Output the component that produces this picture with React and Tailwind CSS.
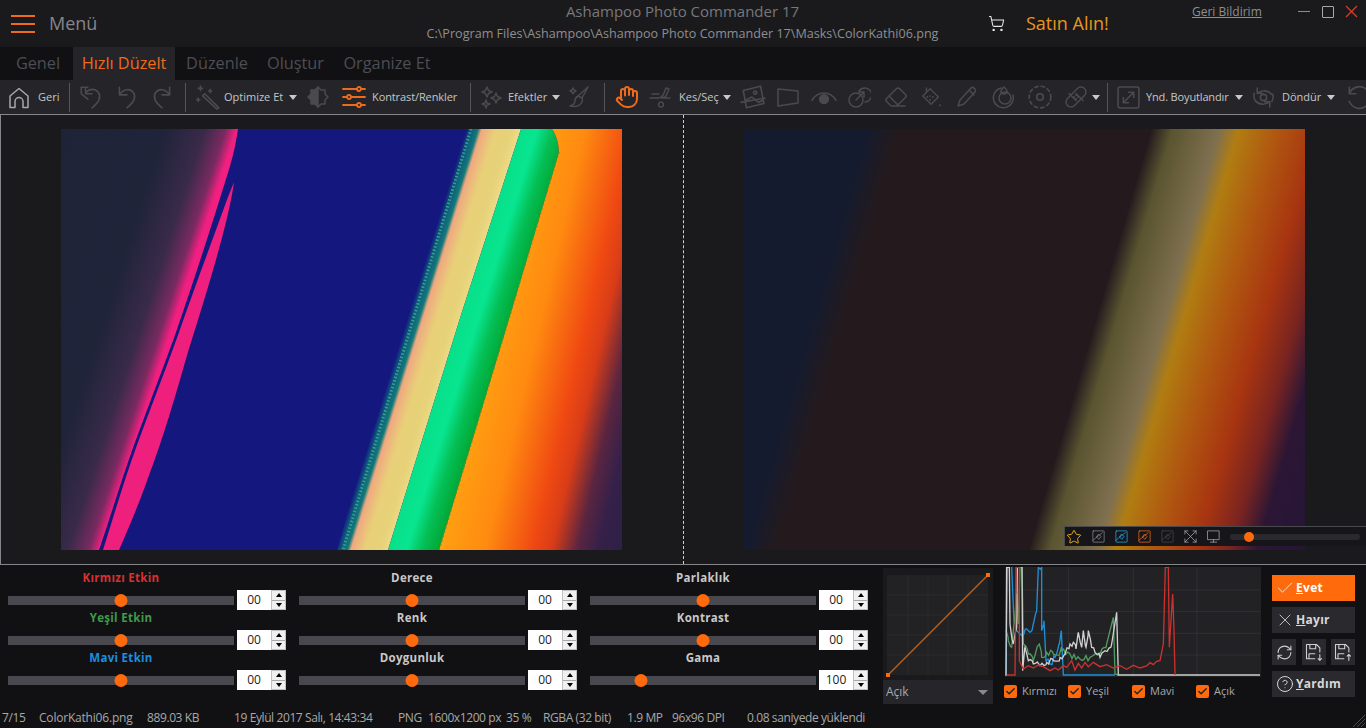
import { Hand, ShoppingCart, Star, Eraser, Check, X, RefreshCw, CircleHelp } from 'lucide-react';

const Ico = ({ size = 24, className = '', sw = 1.5, children }) => (
  <svg width={size} height={size} viewBox="0 0 24 24" fill="none" stroke="currentColor" strokeWidth={sw} strokeLinecap="round" strokeLinejoin="round" className={className}>
    {children}
  </svg>
);

const Caret = () => <span className="block w-0 h-0 border-l-[4px] border-r-[4px] border-t-[5px] border-l-transparent border-r-transparent border-t-[#c8c8c8]" />;
const Sep = () => <span className="block w-px h-[29px] bg-[#55555a]" />;

const Slot = ({ className = '', children }) => (
  <div className={`flex h-full items-center justify-center shrink-0 ${className}`}>{children}</div>
);

const ToolText = ({ className = '', children }) => (
  <div className={`flex h-full items-center shrink-0 whitespace-nowrap pt-[1px] text-[11px] text-[#c6c6c6] ${className}`}>{children}</div>
);

const Toolbar = () => {
  const dim = 'text-[#4a4a4f]';
  return (
    <div className="flex h-[34px] shrink-0 bg-[#252529] overflow-hidden">
      <Slot className="w-[7px]" />
      <Slot className="w-[24px] text-[#a8a8a8]">
        <Ico size={25}><path d="M3 22V10.500L12 3l9 7.500V22h-5v-6a4 4 0 0 0-8 0v6z" /></Ico>
      </Slot>
      <ToolText className="w-[32px] pl-[7px]">Geri</ToolText>
      <Slot className="w-[12px]"><Sep /></Slot>
      <Slot className={`w-[32px] ${dim}`}>
        <Ico size={26}><path d="M3 9l6 5M3 9V3h6M7 3v6h6M7 8c4-4 9-4 12 0 3 5-1 10-6 14" /></Ico>
      </Slot>
      <Slot className={`w-[40px] ${dim}`}>
        <Ico size={26}><path d="M5 3v7h7M5 10c4-6 10-6 13-2 3 5-1 10-6 14" /></Ico>
      </Slot>
      <Slot className={`w-[30px] ${dim}`}>
        <Ico size={26}><path d="M19 3v7h-7M19 10c-4-6-10-6-13-2-3 5 1 10 6 14" /></Ico>
      </Slot>
      <Slot className="w-[16px]"><Sep /></Slot>
      <Slot className={`w-[30px] ${dim}`}>
        <Ico size={26}><path d="M9 9l13 13-2 1L7 11zM5 2v4M3 4h4M3 13v3M1.500 14.500h3M14 5v3M12.500 6.500h3" /></Ico>
      </Slot>
      <ToolText className="w-[65px] pl-[1px]">Optimize Et</ToolText>
      <Slot className="w-[10px]"><Caret /></Slot>
      <Slot className={`w-[40px] ${dim}`}>
        <Ico size={24}><path d="M12 2l-3 3H5v4l-3 3 3 3v4h4l3 3z" fill="currentColor" /><path d="M12 2l3 3h4v4l3 3-3 3v4h-4l-3 3" /></Ico>
      </Slot>
      <Slot className="w-[32px] text-[#ee6a1c]">
        <Ico size={24} sw={1.800}>
          <path d="M1 4h14M19 4h4M1 12h4M9 12h14M1 20h14M19 20h4" />
          <circle cx="17" cy="4" r="2" /><circle cx="7" cy="12" r="2" /><circle cx="17" cy="20" r="2" />
        </Ico>
      </Slot>
      <ToolText className="w-[94px] pl-[2px] tracking-[-0.1px]">Kontrast/Renkler</ToolText>
      <Slot className="w-[12px]"><Sep /></Slot>
      <Slot className={`w-[30px] ${dim}`}>
        <Ico size={24}>
          <path d="M8 2l1.500 3.500L13 7 9.500 8.500 8 12 6.500 8.500 3 7l3.500-1.500zM17 8l1.500 3.500L22 13l-3.500 1.500L17 18l-1.500-3.500L12 13l3.500-1.500zM7 15l1 3 3 1-3 1-1 3-1-3-3-1 3-1z" />
        </Ico>
      </Slot>
      <ToolText className="w-[45px] pl-[2px]">Efektler</ToolText>
      <Slot className="w-[10px]"><Caret /></Slot>
      <Slot className={`w-[36px] ${dim}`}>
        <Ico size={24}><path d="M21 2l-6 11-4-2zM11 11c-2 1-3 3-3 5s-2 4-5 5c5 1 10 0 12-4 1-2 0-3 0-4M6 3l1 2 2 1-2 1-1 2-1-2-2-1 2-1z" /></Ico>
      </Slot>
      <Slot className="w-[14px]"><Sep /></Slot>
      <Slot className="w-[32px] text-[#ee6a1c]"><Hand size={24} strokeWidth={2} /></Slot>
      <Slot className={`w-[36px] ${dim}`}>
        <Ico size={24}><path d="M1 13h8c3 0 5-2 6-5l2-5 3 1-3 7c-1 1-2 2-4 2h8M3 9h7M12 17a2.500 2.500 0 1 0 .01 0z" /></Ico>
      </Slot>
      <ToolText className="w-[43px]">Kes/Seç</ToolText>
      <Slot className="w-[10px]"><Caret /></Slot>
      <Slot className={`w-[42px] ${dim}`}>
        <Ico size={26}><path d="M3 6l16-4 3 16-16 4zM5 15l6-3 6 5 4-2M1 17l22-4" /><circle cx="14" cy="8" r="1.500" /></Ico>
      </Slot>
      <Slot className={`w-[28px] ${dim}`}>
        <Ico size={24}><path d="M2 4l20 2v12L2 21z" /></Ico>
      </Slot>
      <Slot className={`w-[44px] ${dim}`}>
        <Ico size={26}><path d="M1 15c5-9 17-9 22 0" /><circle cx="12" cy="14" r="4" fill="currentColor" /></Ico>
      </Slot>
      <Slot className={`w-[26px] ${dim}`}>
        <Ico size={24}><circle cx="9" cy="15" r="7" /><path d="M12 6a7 7 0 1 1 6 11M9 15l8-8M12 7h5v5" /></Ico>
      </Slot>
      <Slot className={`w-[48px] ${dim}`}><Eraser size={24} strokeWidth={1.500} /></Slot>
      <Slot className={`w-[22px] ${dim}`}>
        <Ico size={24}><path d="M11 3l9 9-8 8-9-9zM7 7V2" /><path d="M8 12h.01M11 15h.01M14 12h.01M11 11h.01M22 21h.01" strokeWidth="2" /></Ico>
      </Slot>
      <Slot className={`w-[50px] ${dim}`}>
        <Ico size={24}><path d="M3 21l2-6L16 3c2-2 6 2 4 4L9 19zM14 5l5 5" /></Ico>
      </Slot>
      <Slot className={`w-[24px] ${dim}`}>
        <Ico size={24}><path d="M9 3a10 10 0 1 0 12 7" /><circle cx="13" cy="13" r="6" /><path d="M12 2c-2 2-3 3-3 4a3 3 0 0 0 6 0c0-1-1-2-3-4z" /></Ico>
      </Slot>
      <Slot className={`w-[48px] ${dim}`}>
        <Ico size={26}><circle cx="12" cy="12" r="10" strokeDasharray="3 3" /><circle cx="12" cy="12" r="3" /></Ico>
      </Slot>
      <Slot className={`w-[24px] ${dim}`}>
        <Ico size={26}>
          <rect x="0" y="7" width="24" height="10" rx="5" transform="rotate(-45 12 12)" />
          <path d="M8.500 8.500l7 7M15.500 8.500l7 7" transform="translate(-3.500 0)" />
          <path d="M10 12h.01M12 10h.01M12 14h.01M14 12h.01" strokeWidth="2" />
        </Ico>
      </Slot>
      <Slot className="w-[16px]"><Caret /></Slot>
      <Slot className="w-[6px]"><Sep /></Slot>
      <Slot className={`w-[36px] ${dim}`}>
        <Ico size={25}><rect x="2" y="2" width="20" height="20" rx="2" /><path d="M7 17L17 7M12 7h5v5M7 12v5h5" /></Ico>
      </Slot>
      <ToolText className="w-[88px] tracking-[-0.15px]">Ynd. Boyutlandır</ToolText>
      <Slot className="w-[10px]"><Caret /></Slot>
      <Slot className={`w-[38px] ${dim}`}>
        <Ico size={25}><path d="M6 3v5h5M6 8a10 10 0 0 1 14 1M18 21v-5h-5M18 16a10 10 0 0 1-14-1M3 8a10 10 0 0 0 1 7M21 9a10 10 0 0 1-1 7" /><circle cx="12" cy="12" r="3" /></Ico>
      </Slot>
      <ToolText className="w-[44px]">Döndür</ToolText>
      <Slot className="w-[10px]"><Caret /></Slot>
      <Slot className={`w-[9px]`} />
      <Slot className={`w-[21px] justify-start ${dim}`}>
        <Ico size={26} className="shrink-0"><path d="M4 3v6h6M4 9a10 10 0 1 1 0 7" /></Ico>
      </Slot>
    </div>
  );
};

const LeftImage = () => (
  <svg width="561" height="421" viewBox="0 0 561 421" className="block">
    <defs>
      <linearGradient id="lDark" gradientUnits="userSpaceOnUse" x1="0" y1="0" x2="158.700" y2="51.800">
        <stop offset="0" stopColor="#1f2337" />
        <stop offset="0.6" stopColor="#20243a" />
        <stop offset="0.82" stopColor="#3a2a4a" />
        <stop offset="0.94" stopColor="#7a2a60" />
        <stop offset="1" stopColor="#f01f80" />
      </linearGradient>
      <linearGradient id="lSand" gradientUnits="userSpaceOnUse" x1="0" y1="0" x2="668.500" y2="207.900">
        <stop offset="0.553" stopColor="#14187e" />
        <stop offset="0.560" stopColor="#0d5a80" />
        <stop offset="0.569" stopColor="#127a78" />
        <stop offset="0.574" stopColor="#f0a880" />
        <stop offset="0.593" stopColor="#e8d078" />
        <stop offset="0.614" stopColor="#e6d278" />
        <stop offset="0.629" stopColor="#f0dc8c" />
      </linearGradient>
      <linearGradient id="lGreen" gradientUnits="userSpaceOnUse" x1="0" y1="0" x2="668.500" y2="207.900">
        <stop offset="0.627" stopColor="#08e08a" />
        <stop offset="0.650" stopColor="#08e590" />
        <stop offset="0.671" stopColor="#05bf55" />
        <stop offset="0.693" stopColor="#00a836" />
      </linearGradient>
      <linearGradient id="lOrange" gradientUnits="userSpaceOnUse" x1="0" y1="0" x2="681" y2="162">
        <stop offset="0.664" stopColor="#ffa012" />
        <stop offset="0.729" stopColor="#ff8a10" />
        <stop offset="0.793" stopColor="#f04a12" />
        <stop offset="0.821" stopColor="#d83c18" />
        <stop offset="0.857" stopColor="#5a2540" />
        <stop offset="0.886" stopColor="#35204a" />
        <stop offset="0.929" stopColor="#2b2045" />
      </linearGradient>
    </defs>
    <rect width="561" height="421" fill="#14187e" />
    <path d="M0 0H177C174 20 170 35 165 50C148 105 130 160 113 209C100 245 86 280 73 316C60 352 50 386 38 421H0Z" fill="url(#lDark)" />
    <path d="M173 53C168 90 150 150 127 223C115 265 102 310 87 349C78 375 68 398 58 421H42C53 386 63 352 76 316C89 280 103 245 116 209C133 160 150 115 167 68Z" fill="#ee1f7d" />
    <path d="M418 0H460L400 186 327 421H287Z" fill="url(#lSand)" />
    <path d="M405 0H420L289 421H276L327 239 364 129Z" fill="url(#lSand)" />
    <path d="M460 0H491Q497 8 498 23L444 203 378 421H327L400 186Z" fill="url(#lGreen)" />
    <path d="M491 0H561V421H378L444 203 498 23Q497 8 491 0Z" fill="url(#lOrange)" />
    <path d="M410 0L282 421" stroke="#3aa088" strokeWidth="3" strokeDasharray="1.500 2" fill="none" />
    <path d="M498 23L444 203 378 421" stroke="#4aa01e" strokeWidth="1.500" strokeDasharray="1.500 3" fill="none" />
  </svg>
);

const RightImage = () => (
  <svg width="562" height="421" viewBox="0 0 562 421" className="block">
    <defs>
      <linearGradient id="rAll" gradientUnits="userSpaceOnUse" x1="0" y1="0" x2="672" y2="196">
        <stop offset="0" stopColor="#141b2e" />
        <stop offset="0.170" stopColor="#141b2e" />
        <stop offset="0.214" stopColor="#241a1e" />
        <stop offset="0.560" stopColor="#241a1e" />
        <stop offset="0.589" stopColor="#5a5430" />
        <stop offset="0.654" stopColor="#7f7050" />
        <stop offset="0.680" stopColor="#b07d12" />
        <stop offset="0.729" stopColor="#b05a10" />
        <stop offset="0.789" stopColor="#a83510" />
        <stop offset="0.836" stopColor="#7a2420" />
        <stop offset="0.874" stopColor="#2c1635" />
        <stop offset="0.943" stopColor="#241535" />
      </linearGradient>
    </defs>
    <rect width="562" height="421" fill="url(#rAll)" />
  </svg>
);

const MiniIcon = ({ className }) => (
  <Ico size={15} sw={1.200} className={className}>
    <rect x="3" y="3" width="18" height="18" rx="1" /><path d="M3 18L18 6M9 12l3-4 4 4-3 4z" />
  </Ico>
);

const Overlay = () => (
  <div className="absolute left-[380px] top-[411px] flex h-[20px] w-[302px] items-center border-l border-t border-[#4a4a4e] bg-[#16161a]">
    <Star size={16} strokeWidth={1.500} className="ml-[1px] text-[#e6a817]" />
    <div className="ml-[9px] flex w-[138px] items-center">
      <div className="flex w-[23px]"><MiniIcon className="text-[#8a8a8e]" /></div>
      <div className="flex w-[23px]"><MiniIcon className="text-[#29a8e0]" /></div>
      <div className="flex w-[23px]"><MiniIcon className="text-[#f26a1b]" /></div>
      <div className="flex w-[23px]"><MiniIcon className="text-[#47474b]" /></div>
      <div className="flex w-[23px] text-[#a8a8ac]">
        <Ico size={15} sw={1.200}><path d="M3 3l18 18M21 3L3 21M3 8V3h5M16 3h5v5M3 16v5h5M21 16v5h-5" /></Ico>
      </div>
      <div className="flex w-[23px] text-[#a8a8ac]">
        <Ico size={15} sw={1.200}><rect x="3" y="3" width="18" height="14" /><path d="M12 17v4M7 21h10" /></Ico>
      </div>
    </div>
    <div className="relative ml-[1px] h-[6px] w-[130px] rounded-full bg-[#2a2a2e]">
      <span className="absolute left-[14px] -top-[2px] h-[10px] w-[10px] rounded-full bg-[#ff6a0c]" />
    </div>
  </div>
);

const Viewer = () => (
  <div className="relative flex h-[451px] shrink-0 border-y border-l border-[#85858a] bg-[#1a1a1c]">
    <div className="flex w-[682px] items-center justify-center pr-[1px]"><LeftImage /></div>
    <div className="w-0 h-full border-l border-dashed border-[#d0d0d0]" />
    <div className="relative flex flex-1 items-center justify-center pr-[2px]">
      <RightImage />
      <Overlay />
    </div>
  </div>
);

const Spin = ({ value }) => (
  <div className="flex h-[20px] w-[49px] shrink-0">
    <div className="flex h-full w-[34px] items-center justify-center bg-white text-[12px] text-[#222]">{value}</div>
    <div className="flex h-full w-[15px] flex-col border border-[#c0c0c0] bg-[#f0f0f0]">
      <div className="flex flex-1 items-center justify-center border-b border-[#a8a8a8]">
        <span className="h-0 w-0 border-b-[4px] border-l-[3.500px] border-r-[3.500px] border-b-black border-l-transparent border-r-transparent" />
      </div>
      <div className="flex flex-1 items-center justify-center">
        <span className="h-0 w-0 border-t-[4px] border-l-[3.500px] border-r-[3.500px] border-t-black border-l-transparent border-r-transparent" />
      </div>
    </div>
  </div>
);

const Adjust = ({ label, color, thumb, value }) => (
  <div className="flex h-[40px] w-[278px] flex-col">
    <div className={`h-[20px] w-[226px] text-center text-[11.500px] font-bold leading-[16px] tracking-[0.3px] ${color}`}>{label}</div>
    <div className="flex items-center gap-[3px]">
      <div className="relative h-[9px] w-[226px] bg-[#48484e]">
        <span className="absolute -top-[2px] h-[13px] w-[13px] -translate-x-1/2 rounded-full bg-[#ff6a0c]" style={{ left: thumb }} />
      </div>
      <Spin value={value} />
    </div>
  </div>
);

const StatusCell = ({ className = '', children }) => (
  <span className={`shrink-0 whitespace-nowrap ${className}`}>{children}</span>
);

const StatusBar = () => (
  <div className="flex h-[20px] items-center pl-[2px] text-[12px] leading-[20px] tracking-[-0.4px] text-[#a8a8a8]">
    <StatusCell className="w-[37px]">7/15</StatusCell>
    <StatusCell className="w-[108px] tracking-[-0.2px]">ColorKathi06.png</StatusCell>
    <StatusCell className="w-[87px]">889.03 KB</StatusCell>
    <StatusCell className="w-[164px]">19 Eylül 2017 Salı, 14:43:34</StatusCell>
    <StatusCell className="w-[30px]">PNG</StatusCell>
    <StatusCell className="w-[78px]">1600x1200 px</StatusCell>
    <StatusCell className="w-[37px]">35 %</StatusCell>
    <StatusCell className="w-[84px]">RGBA (32 bit)</StatusCell>
    <StatusCell className="w-[45px]">1.9 MP</StatusCell>
    <StatusCell className="w-[75px]">96x96 DPI</StatusCell>
    <StatusCell>0.08 saniyede yüklendi</StatusCell>
  </div>
);

const Curve = () => (
  <div className="flex w-[110px] shrink-0 flex-col">
    <div className="h-[112px] bg-[#1a1a1c]">
      <svg width="110" height="112" viewBox="0 0 110 112" className="block">
        <rect x="4" y="7" width="101" height="100" fill="#222225" />
        <path d="M25 7v100M45 7v100M65 7v100M85 7v100M4 27h101M4 47h101M4 67h101M4 87h101" stroke="#2a2a2d" strokeWidth="1" />
        <path d="M5 107L105 7" stroke="#b5601f" strokeWidth="1.500" />
        <rect x="3" y="105" width="4" height="4" fill="#ff6a0c" />
        <rect x="103" y="5" width="4" height="4" fill="#ff6a0c" />
      </svg>
    </div>
    <div className="flex h-[24px] items-center justify-between bg-[#26262a] pl-[3px] pr-[5px] text-[12px] text-[#a8a8a8]">
      <span>Açık</span>
      <span className="h-0 w-0 border-l-[5px] border-r-[5px] border-t-[5px] border-l-transparent border-r-transparent border-t-[#8a8a8e]" />
    </div>
  </div>
);

// fills the slow parts of a curve with small spikes, the steep edges stay clean
const noisy = (points, amp) => {
  const pts = points.trim().split(' ').map((p) => p.split(',').map(Number));
  const out = [];
  pts.forEach(([x, y], i) => {
    out.push(`${x},${y}`);
    const next = pts[i + 1];
    if (!next || Math.abs(next[1] - y) > 70 || y >= 330) return;
    for (let sx = x + 6; sx < next[0]; sx += 6) {
      const t = (sx - x) / (next[0] - x);
      const r = Math.sin(sx * 12.9898) * 43758.5453;
      const sy = y + (next[1] - y) * t + (r - Math.floor(r) - 0.5) * amp;
      out.push(`${sx},${Math.min(sy, 332).toFixed(1)}`);
    }
  });
  return out.join(' ');
};

const Histogram = () => (
  <svg width="256" height="110" viewBox="15 9 768 330" className="block">
    <rect x="15" y="9" width="768" height="330" fill="#222225" />
    <path d="M205 9v324M400 9v324M591 9v324M15 78h768M15 143h768M15 208h768M15 273h768" stroke="#38383c" strokeWidth="2" fill="none" />
    <polyline fill="none" stroke="#1f8fd8" strokeWidth="4" points={noisy('18,335 22,9 35,10 38,80 42,170 50,200 60,210 70,215 80,195 90,205 100,180 110,140 115,10 125,10 125,200 132,170 138,290 150,300 165,280 178,240 184,200 190,333 345,333', 22)} />
    <polyline fill="none" stroke="#4f9a5c" strokeWidth="4" points={noisy('18,200 25,230 35,250 45,150 50,90 55,180 60,10 66,10 70,240 85,270 100,290 118,240 125,280 140,265 160,270 185,260 210,270 240,285 270,280 300,270 320,240 340,160 345,330 355,333', 22)} />
    <polyline fill="none" stroke="#d0d0d0" strokeWidth="4" points={noisy('18,335 20,10 28,10 30,180 40,240 50,190 52,10 66,10 68,320 75,250 85,290 100,300 120,305 140,295 160,290 180,280 195,270 210,240 220,235 228,255 235,205 245,250 250,200 258,250 265,200 275,250 285,265 300,280 315,260 335,240 350,145 355,333 780,333', 20)} />
    <polyline fill="none" stroke="#c9322e" strokeWidth="4" points="20,333 45,333 48,10 58,10 58,290 70,315 85,305 100,312 115,303 130,308 150,320 165,312 175,318 190,305 200,310 215,290 225,318 235,298 245,312 255,295 265,308 280,295 300,308 320,302 340,312 360,305 380,316 400,304 420,312 440,306 450,296 460,302 470,292 480,290 490,240 496,10 505,10 508,250 518,90 522,200 525,333" />
  </svg>
);

const Toggle = ({ label, className = '' }) => (
  <div className={`flex shrink-0 items-center ${className}`}>
    <span className="flex h-[13px] w-[13px] items-center justify-center rounded-[2px] bg-[#ff6a0c]">
      <Check size={11} strokeWidth={3} className="text-[#222]" />
    </span>
    <span className="ml-[5px] text-[11px] text-[#a8a8a8]">{label}</span>
  </div>
);

const Action = ({ icon, first, rest, className = '' }) => (
  <button className={`flex h-[26px] w-[83px] items-center pl-[3px] text-[12px] font-bold tracking-[0.3px] text-white ${className}`}>
    {icon}
    <span className="ml-[1px]"><u>{first}</u>{rest}</span>
  </button>
);

const SaveArrow = ({ up }) => (
  <Ico size={20} sw={1.300}>
    <path d="M3 3h12l4 4v5M3 3v17h10M7 3v5h7V3M6 20v-6h7" />
    <path d={up ? 'M19 22v-7M17 17l2-2 2 2' : 'M19 15v7M17 20l2 2 2-2'} />
  </Ico>
);

const Buttons = () => (
  <div className="flex w-[83px] shrink-0 flex-col gap-[6px] pt-[10px]">
    <Action first="E" rest="vet" className="bg-[#ff6a0c]" icon={<Check size={20} strokeWidth={1} />} />
    <Action first="H" rest="ayır" className="bg-[#2a2a2e] !text-[#d8d8d8]" icon={<X size={20} strokeWidth={1} />} />
    <div className="flex h-[26px] justify-between text-[#d0d0d0]">
      <span className="flex w-[24px] items-center justify-center bg-[#2a2a2e]"><RefreshCw size={17} strokeWidth={1.500} /></span>
      <span className="flex w-[24px] items-center justify-center bg-[#2a2a2e]"><SaveArrow /></span>
      <span className="flex w-[24px] items-center justify-center bg-[#2a2a2e]"><SaveArrow up /></span>
    </div>
    <Action first="Y" rest="ardım" className="bg-[#2a2a2e] !text-[#d8d8d8]" icon={<CircleHelp size={18} strokeWidth={1.300} className="mx-[1px]" />} />
  </div>
);

const Bottom = () => (
  <div className="relative flex flex-1 bg-[#111114]">
    <div className="flex w-[883px] shrink-0 flex-col pl-[8px]">
      <div className="grid grid-cols-[278px_278px_278px] gap-x-[13px] pt-[5px]">
        <Adjust label="Kırmızı Etkin" color="text-[#d93030]" thumb={113} value="00" />
        <Adjust label="Derece" color="text-[#c8c8c8]" thumb={113} value="00" />
        <Adjust label="Parlaklık" color="text-[#c8c8c8]" thumb={113} value="00" />
        <Adjust label="Yeşil Etkin" color="text-[#3f9a4a]" thumb={113} value="00" />
        <Adjust label="Renk" color="text-[#c8c8c8]" thumb={113} value="00" />
        <Adjust label="Kontrast" color="text-[#c8c8c8]" thumb={113} value="00" />
        <Adjust label="Mavi Etkin" color="text-[#1a8ee0]" thumb={113} value="00" />
        <Adjust label="Doygunluk" color="text-[#c8c8c8]" thumb={113} value="00" />
        <Adjust label="Gama" color="text-[#c8c8c8]" thumb={51} value="100" />
      </div>
      <div className="-ml-[8px] mt-[18px]"><StatusBar /></div>
    </div>
    <div className="pt-[3px]"><Curve /></div>
    <div className="ml-[12px] flex w-[256px] shrink-0 flex-col pt-[2px]">
      <Histogram />
      <div className="-ml-[1px] mt-[6px] flex">
        <Toggle label="Kırmızı" className="w-[64px]" />
        <Toggle label="Yeşil" className="w-[64px]" />
        <Toggle label="Mavi" className="w-[64px]" />
        <Toggle label="Açık" />
      </div>
    </div>
    <div className="ml-[11px]"><Buttons /></div>
    <svg width="16" height="16" viewBox="0 0 16 16" className="absolute bottom-0 right-0">
      <path d="M15 3L3 15M15 7L7 15M15 11L11 15" stroke="#4a4a4e" strokeWidth="1" />
    </svg>
  </div>
);

const Header = () => (
  <div className="relative flex h-[47px] shrink-0 items-center bg-[#1a1a1c]">
    <svg width="24" height="20" viewBox="0 0 24 20" className="ml-[11px] shrink-0">
      <path d="M0 2h24M0 10h24M0 18h24" stroke="#ee6a1c" strokeWidth="2" />
    </svg>
    <span className="ml-[14px] w-[377px] shrink-0 text-[18px] text-[#85858a]">Menü</span>
    <div className="flex w-[513px] shrink-0 flex-col items-center whitespace-nowrap">
      <span className="-mt-[1px] text-[15px] leading-[22px] text-[#77777b]">Ashampoo Photo Commander 17</span>
      <span className="text-[12.600px] leading-[24px] text-[#8e8e92]">C:\Program Files\Ashampoo\Ashampoo Photo Commander 17\Masks\ColorKathi06.png</span>
    </div>
    <ShoppingCart size={17} strokeWidth={1.500} className="ml-[49px] shrink-0 text-[#e8e8e8]" />
    <span className="ml-[21px] text-[18px] text-[#e8961e]">Satın Alın!</span>
    <span className="absolute left-[1192px] top-[3px] text-[12px] text-[#8e8e92] underline">Geri Bildirim</span>
    <div className="absolute right-0 top-[5px] flex items-center pr-[8px]">
      <span className="block h-px w-[12px] bg-[#8e8e92]" />
      <span className="ml-[12px] block h-[12px] w-[12px] rounded-[1px] border border-[#a8a8ac]" />
      <svg width="13" height="13" viewBox="0 0 13 13" className="ml-[11px]">
        <path d="M1 1l11 11M12 1L1 12" stroke="#d0402a" strokeWidth="1.300" />
      </svg>
    </div>
  </div>
);

const Tabs = () => (
  <div className="flex h-[33px] shrink-0 items-stretch bg-[#111114] pl-[16px] text-[16.300px] text-[#4d4d52]">
    <span className="flex w-[44px] items-center justify-center">Genel</span>
    <span className="ml-[13px] flex w-[102px] items-center justify-center bg-[#252529] text-[#ee6a1c]">Hızlı Düzelt</span>
    <span className="ml-[11px] flex w-[62px] items-center justify-center">Düzenle</span>
    <span className="ml-[19px] flex w-[57px] items-center justify-center">Oluştur</span>
    <span className="ml-[19px] flex w-[88px] items-center justify-center">Organize Et</span>
  </div>
);

export default function App() {
  return (
    <div className="flex h-[728px] w-[1366px] flex-col overflow-hidden bg-[#111114] font-['Open_Sans',sans-serif]">
      <Header />
      <Tabs />
      <Toolbar />
      <Viewer />
      <Bottom />
    </div>
  );
}
